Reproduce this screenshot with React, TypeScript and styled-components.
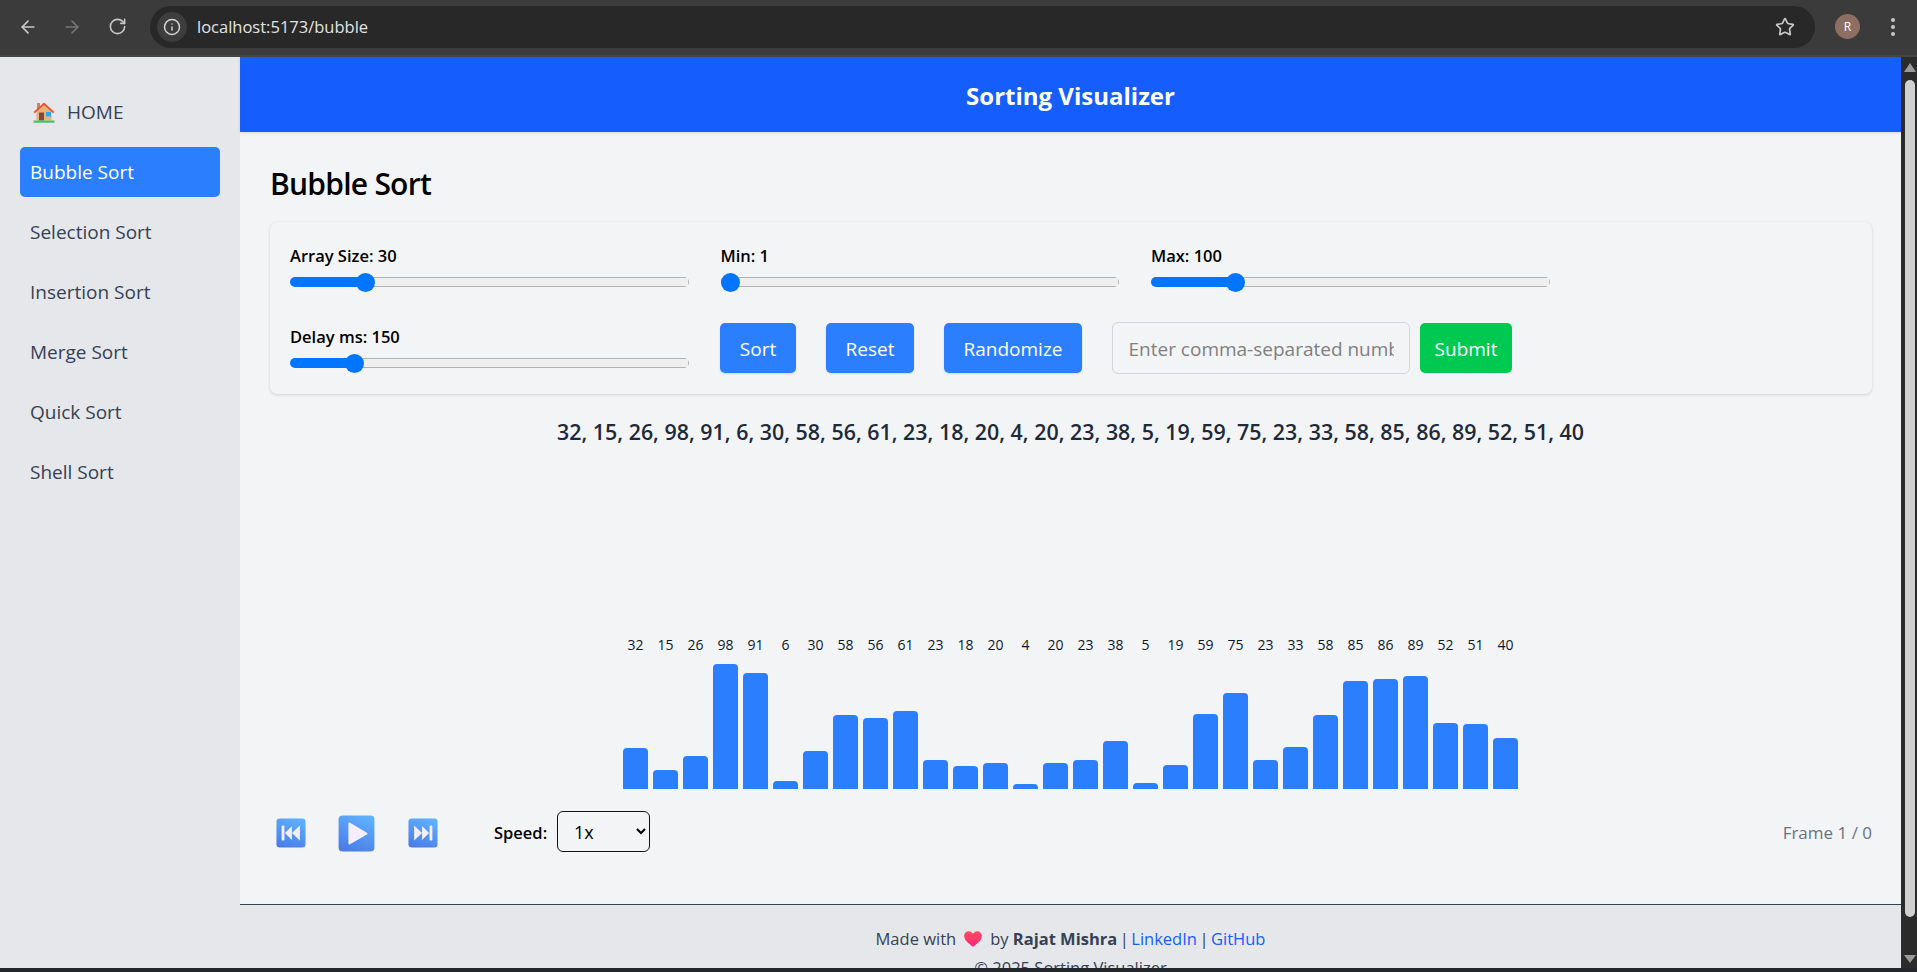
import React from "react";
import styled, { createGlobalStyle } from "styled-components";
import { ArrowLeft, ArrowRight, RotateCw, Info, Star } from "lucide-react";

const FONT = `"Open Sans", "Noto Sans", "Liberation Sans", sans-serif`;

const Global = createGlobalStyle`
  html, body { margin: 0; padding: 0; overflow: hidden; background: #202124; }
  * { box-sizing: border-box; }
  body { font-family: ${FONT}; }
`;

const Window = styled.div`
  width: 1917px; height: 972px; display: flex; flex-direction: column; overflow: hidden;
`;
const Toolbar = styled.div`
  height: 57px; flex: none; background: #3b3b3b; border-bottom: 2px solid #454545;
  display: flex; align-items: center; padding: 0 0 2px 18px; position: relative;
`;
const NavBtn = styled.span<{ $dim?: boolean; $gap: number }>`
  display: flex; width: 20px; height: 20px; flex: none; margin-right: ${p => p.$gap}px; color: ${p => (p.$dim ? "#757575" : "#c8c8c8")};
`;
const Omnibox = styled.div`
  width: 1665px; height: 42px; flex: none; border-radius: 21px; background: #282828;
  display: flex; align-items: center; padding: 0 0 0 7px;
`;
const InfoChip = styled.span`
  width: 30px; height: 30px; border-radius: 50%; background: #3d3d3d; color: #d5d5d5;
  display: flex; align-items: center; justify-content: center; flex: none;
`;
const Url = styled.span`
  font-size: 16.5px; color: #e3e3e3; margin-left: 10px; flex: 1;
`;
const StarBtn = styled.span`
  display: flex; color: #c8c8c8; margin-right: 20px;
`;
const Avatar = styled.span`
  width: 25px; height: 25px; border-radius: 50%; background: #8d6e63; color: #fff; font-size: 12px;
  display: flex; align-items: center; justify-content: center; margin-left: 20px; flex: none;
`;
const Dots = styled.span`
  display: flex; flex-direction: column; gap: 3px; margin-left: 31px; flex: none;
`;
const Dot = styled.i`
  display: block; width: 4px; height: 4px; border-radius: 50%; background: #c8c8c8;
`;
const Viewport = styled.div`
  height: 911px; flex: none; display: flex; overflow: hidden;
`;
const Sidebar = styled.nav`
  width: 240px; flex: none; background: #e5e7eb; padding: 30px 20px 0;
  display: flex; flex-direction: column; gap: 10px; color: #364153; font-size: 19px;
`;
const HomeLink = styled.a`
  height: 50px; padding: 0 12px; display: flex; align-items: center; gap: 11px; color: #364153;
`;
const NavItem = styled.a<{ $active?: boolean }>`
  height: 50px; padding: 0 10px; display: flex; align-items: center; border-radius: 5px;
  background: ${p => (p.$active ? "#2b7fff" : "transparent")};
  color: ${p => (p.$active ? "#ffffff" : "#364153")};
`;
const MainColumn = styled.div`
  flex: 1; min-width: 0; display: flex; flex-direction: column; background: #f3f4f6;
`;
const Header = styled.header`
  height: 75px; flex: none; background: #155dfc; color: #fff; display: flex; align-items: center; justify-content: center;
  font-size: 24px; font-weight: 700; box-shadow: 0 1px 3px rgba(0,0,0,.12); position: relative;
  padding: 1px 0 0;
`;
const Content = styled.main`
  flex: 1; min-height: 0; padding: 31px 29px 0 30px; display: flex; flex-direction: column;
`;
const Title = styled.h1`
  margin: 0 0 19px; font-size: 30px; line-height: 40px; font-weight: 600; color: #000; letter-spacing: -0.75px; padding-top: 1px; height: 40px;
`;
const Card = styled.section`
  height: 172px; flex: none; padding: 20px; border-radius: 7px; background: #f3f4f6;
  box-shadow: 0 1px 3px rgba(0,0,0,.14), 0 0 1px rgba(0,0,0,.06);
  display: grid; grid-template-columns: repeat(3, 398.5px); grid-template-rows: 50px 50px; column-gap: 32px; row-gap: 31px;
`;
const Field = styled.div`
  padding-top: 2px; display: flex; flex-direction: column; gap: 4px;
`;
const FieldLabel = styled.label`
  font-size: 16.5px; line-height: 24px; font-weight: 600; color: #000;
`;
const Range = styled.input.attrs({ type: "range", readOnly: true })<{ $fill: number }>`
  -webkit-appearance: none; appearance: none; width: 100%; height: 20px; margin: 0; background: transparent; display: block;
  &::-webkit-slider-runnable-track {
    height: 10px; border-radius: 5px; background-color: #b2b2b2;
    background-image:
      linear-gradient(to right, #0075ff ${p => p.$fill}%, transparent ${p => p.$fill}%),
      linear-gradient(#efefef, #efefef);
    background-size: 100% 100%, calc(100% - 2px) 8px;
    background-position: center;
    background-repeat: no-repeat;
  }
  &::-webkit-slider-thumb {
    -webkit-appearance: none; width: 19px; height: 19px; border-radius: 50%; background: #0075ff; margin-top: -4.5px;
  }
`;
const Actions = styled.div`
  grid-column: 2 / -1; display: flex; align-items: center; gap: 30px; margin-left: -1px;
`;
const Button = styled.button<{ $w: number }>`
  width: ${p => p.$w}px; height: 50px; border: 0; border-radius: 5px; background: #2b7fff; color: #fff;
  font: 400 19px ${FONT}; box-shadow: 0 1px 2px rgba(0,0,0,.12); padding: 1px 0 0 1px; flex: none;
`;
const InputGroup = styled.div`
  display: flex; align-items: center; gap: 10px;
`;
const NumberInput = styled.input`
  width: 298px; height: 52px; border: 1px solid #d1d5dc; border-radius: 6px; background: transparent; padding: 1px 15px 0 16px;
  font: 400 19px ${FONT}; outline: 0;
  &::placeholder { color: #808080; opacity: 1; }
`;
const SubmitButton = styled(Button)`
  background: #00c951; box-shadow: none;
`;
const Numbers = styled.p`
  margin: 24px 0 0; padding-right: 1px; text-align: center; font-size: 21.4px; line-height: 28px; font-weight: 600; color: #1e2939;
`;
const Chart = styled.div`
  margin-top: 189px; padding-right: 1px; display: flex; justify-content: center; gap: 5px;
`;
const Column = styled.div`
  width: 25px; display: flex; flex-direction: column; align-items: center;
`;
const BarValue = styled.span`
  font-size: 14px; line-height: 20px; color: #101828; margin-bottom: 9px;
`;
const BarSlot = styled.div`
  height: 125px; width: 100%; display: flex; align-items: flex-end;
`;
const Bar = styled.div<{ $h: number }>`
  width: 100%; height: ${p => p.$h}px; background: #2b7fff; border-radius: 4px 4px 0 0;
`;
const Playback = styled.div`
  margin-top: 22px; height: 41px; display: flex; align-items: center; justify-content: space-between;
`;
const PlayGroup = styled.div`
  display: flex; align-items: center; padding-left: 6px;
`;
const IconBtn = styled.span<{ $gap: number }>`
  display: flex; margin-top: 3px; margin-right: ${p => p.$gap}px;
`;
const SpeedLabel = styled.label`
  font-size: 16.5px; font-weight: 600; color: #000; margin-right: 9px; width: 54px; white-space: nowrap; padding-top: 2px;
`;
const SpeedSelect = styled.select`
  width: 93px; height: 41px; border: 1px solid #111; border-radius: 6px; background: transparent; color: #000;
  font: 400 18px ${FONT}; padding-left: 12px;
`;
const FrameText = styled.span`
  font-size: 17px; color: #6a7282; padding-top: 2px;
`;
const Footer = styled.footer`
  height: 64px; flex: none; background: #e5e7eb; border-top: 1px solid #364153; overflow: hidden; padding-top: 23px;
  text-align: center; color: #364153; font-size: 16.5px; line-height: 22px;
`;
const FooterLine = styled.div<{ $top?: number }>`
  margin-top: ${p => p.$top ?? 0}px; display: flex; justify-content: center; align-items: center; white-space: pre;
`;
const HeartWrap = styled.span`
  display: flex; margin: 0 8px;
`;
const Strong = styled.strong`
  font-weight: 700;
`;
const Sep = styled.span`
  margin: 0 2.5px;
`;
const FooterLink = styled.a`
  color: #155dfc;
`;
const ScrollTrack = styled.div`
  width: 16px; flex: none; background: #2b2b2b; padding: 6px 0 0 4px; display: flex; flex-direction: column;
`;
const ArrowUp = styled.i`
  display: block; width: 0; height: 0; margin-left: -1px; border-left: 6px solid transparent; border-right: 6px solid transparent; border-bottom: 9px solid #9a9a9a;
`;
const ArrowDown = styled.i`
  display: block; width: 0; height: 0; margin-left: -1px; margin-top: 38px; border-left: 6px solid transparent; border-right: 6px solid transparent; border-top: 8px solid #9a9a9a;
`;
const Thumb = styled.div`
  width: 10px; height: 837px; margin-top: 8px; background: #d0d0d0; border-radius: 5px; flex: none;
`;
const BottomStrip = styled.div`
  height: 4px; flex: none; background: #23272b;
`;

const HomeEmoji = () => (
  <svg width="24" height="24" viewBox="0 0 24 24">
    <rect x="5" y="3" width="3" height="7" fill="#c98a55" />
    <path d="M4.500 11 12 4l7.500 7v9.500h-15z" fill="#eab27c" />
    <path d="M1.500 12 12 2.500 22.500 12l-1.300 1.200L12 5 2.800 13.200z" fill="#f0502e" />
    <rect x="7" y="12.500" width="5" height="8" fill="#7d4a3c" />
    <rect x="14" y="12" width="5" height="4.500" fill="#29a9ee" />
    <rect x="1.500" y="20.500" width="21" height="2.200" fill="#43c463" />
  </svg>
);

const KeyBase = ({ size, id, children }: { size: number; id: string; children: React.ReactNode }) => (
  <svg width={size} height={size} viewBox="0 0 32 32">
    <defs>
      <linearGradient id={id} x1="0.7" y1="0" x2="0.3" y2="1">
        <stop offset="0" stopColor="#5fb0ff" />
        <stop offset="1" stopColor="#4a7ee6" />
      </linearGradient>
    </defs>
    <rect x="0.5" y="0.5" width="31" height="31" rx="3.5" fill={`url(#${id})`} />
    {children}
  </svg>
);

const PrevIcon = () => (
  <KeyBase size={30} id="kp">
    <g fill="#f5eefe">
      <rect x="6" y="8" width="3" height="16" rx="1" />
      <path d="M9.500 16 17 8.500v15z" />
      <path d="M17 16 25.500 8v16z" />
    </g>
  </KeyBase>
);
const PlayIcon = () => (
  <KeyBase size={37} id="kg">
    <path d="M9 7.500c0-.8.8-1.200 1.400-.8L25 15.300c.6.4.6 1.200 0 1.500L10.400 25.300c-.6.4-1.400 0-1.400-.8z" fill="#f5eefe" />
  </KeyBase>
);
const NextIcon = () => (
  <KeyBase size={30} id="kn">
    <g fill="#f5eefe">
      <path d="M6.500 8 15 16l-8.500 8z" />
      <path d="M15 8.500 22.500 16 15 23.500z" />
      <rect x="23" y="8" width="3" height="16" rx="1" />
    </g>
  </KeyBase>
);
const HeartIcon = () => (
  <svg width="18" height="16" viewBox="0 0 18 16">
    <defs>
      <linearGradient id="ht" x1="0" y1="0" x2="0" y2="1">
        <stop offset="0" stopColor="#ff4d5e" />
        <stop offset="1" stopColor="#f5237f" />
      </linearGradient>
    </defs>
    <path d="M9 15.800C6 13.300.2 9.700.2 4.900.2 2.200 2.300.2 4.800.2c1.800 0 3.300.9 4.200 2.500C9.900 1.100 11.400.2 13.200.2c2.500 0 4.600 2 4.600 4.700 0 4.800-5.800 8.400-8.800 10.900z" fill="url(#ht)" />
  </svg>
);

const SLIDERS_A = [
  { label: "Array Size: 30", value: 30, min: 9, max: 129 },
  { label: "Min: 1", value: 1, min: 1, max: 100 },
  { label: "Max: 100", value: 100, min: 2, max: 500 },
];
const DELAY = { label: "Delay ms: 150", value: 150, min: 5, max: 1000 };
const DATA = [32, 15, 26, 98, 91, 6, 30, 58, 56, 61, 23, 18, 20, 4, 20, 23, 38, 5, 19, 59, 75, 23, 33, 58, 85, 86, 89, 52, 51, 40];
const ALGOS = ["Bubble Sort", "Selection Sort", "Insertion Sort", "Merge Sort", "Quick Sort", "Shell Sort"];

const fillOf = (s: { value: number; min: number; max: number }) => {
  const f = (s.value - s.min) / (s.max - s.min);
  return (9.5 + f * 380) / 399 * 100;
};

const Slider = ({ s }: { s: typeof DELAY }) => (
  <Field>
    <FieldLabel>{s.label}</FieldLabel>
    <Range $fill={fillOf(s)} min={s.min} max={s.max} value={s.value} onChange={() => {}} />
  </Field>
);

export default function App() {
  return (
    <Window>
      <Global />
      <Toolbar>
        <NavBtn $gap={24}><ArrowLeft size={20} strokeWidth={2} /></NavBtn>
        <NavBtn $gap={26} $dim><ArrowRight size={20} strokeWidth={2} /></NavBtn>
        <NavBtn $gap={22}><RotateCw size={19} strokeWidth={2} /></NavBtn>
        <Omnibox>
          <InfoChip><Info size={18} strokeWidth={2} /></InfoChip>
          <Url>localhost:5173/bubble</Url>
          <StarBtn><Star size={20} strokeWidth={2} /></StarBtn>
        </Omnibox>
        <Avatar>R</Avatar>
        <Dots><Dot /><Dot /><Dot /></Dots>
      </Toolbar>
      <Viewport>
        <Sidebar>
          <HomeLink><HomeEmoji />HOME</HomeLink>
          {ALGOS.map((a, i) => (
            <NavItem key={a} $active={i === 0}>{a}</NavItem>
          ))}
        </Sidebar>
        <MainColumn>
          <Header>Sorting Visualizer</Header>
          <Content>
            <Title>Bubble Sort</Title>
            <Card>
              {SLIDERS_A.map(s => <Slider key={s.label} s={s} />)}
              <Slider s={DELAY} />
              <Actions>
                <Button $w={76}>Sort</Button>
                <Button $w={88}>Reset</Button>
                <Button $w={138}>Randomize</Button>
                <InputGroup>
                  <NumberInput placeholder="Enter comma-separated numbers" />
                  <SubmitButton $w={92}>Submit</SubmitButton>
                </InputGroup>
              </Actions>
            </Card>
            <Numbers>{DATA.join(", ")}</Numbers>
            <Chart>
              {DATA.map((v, i) => (
                <Column key={i}>
                  <BarValue>{v}</BarValue>
                  <BarSlot><Bar $h={Math.round(v * 1.275)} /></BarSlot>
                </Column>
              ))}
            </Chart>
            <Playback>
              <PlayGroup>
                <IconBtn $gap={32}><PrevIcon /></IconBtn>
                <IconBtn $gap={33}><PlayIcon /></IconBtn>
                <IconBtn $gap={56}><NextIcon /></IconBtn>
                <SpeedLabel>Speed:</SpeedLabel>
                <SpeedSelect defaultValue="1x">
                  <option>1x</option>
                  <option>2x</option>
                  <option>4x</option>
                </SpeedSelect>
              </PlayGroup>
              <FrameText>Frame 1 / 0</FrameText>
            </Playback>
          </Content>
          <Footer>
            <FooterLine>
              Made with<HeartWrap><HeartIcon /></HeartWrap>by <Strong>Rajat Mishra</Strong><Sep>|</Sep><FooterLink>LinkedIn</FooterLink><Sep>|</Sep><FooterLink>GitHub</FooterLink>
            </FooterLine>
            <FooterLine $top={7}>© 2025 Sorting Visualizer</FooterLine>
          </Footer>
        </MainColumn>
        <ScrollTrack>
          <ArrowUp />
          <Thumb />
          <ArrowDown />
        </ScrollTrack>
      </Viewport>
      <BottomStrip />
    </Window>
  );
}
